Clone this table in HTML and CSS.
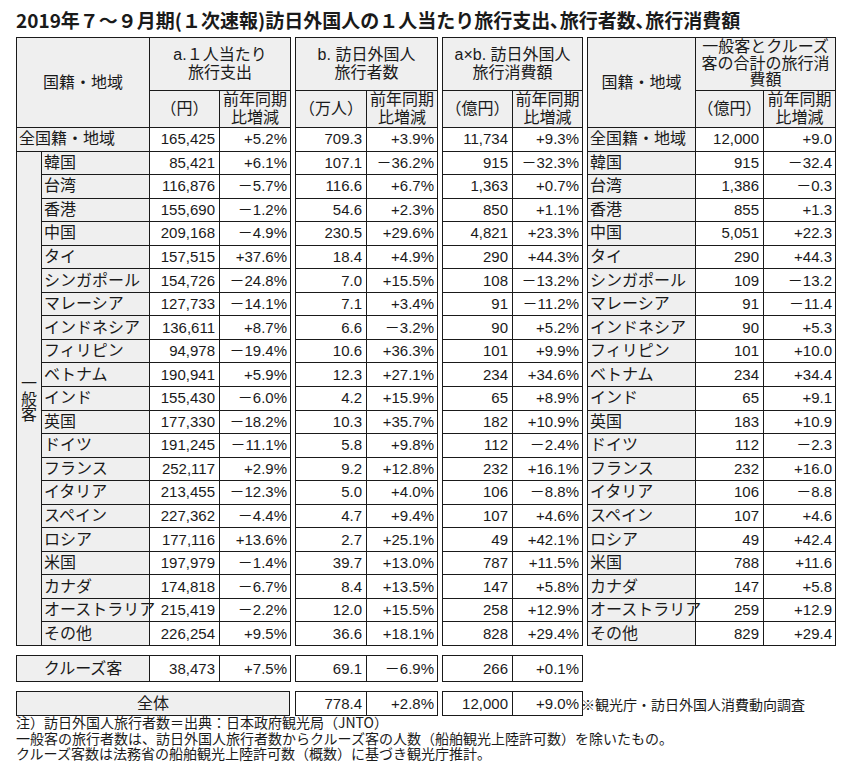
FILE: index.html
```html
<!DOCTYPE html>
<html lang="ja">
<head>
<meta charset="utf-8">
<title>訪日外国人の旅行支出</title>
<link rel="stylesheet" href="styles.css">
</head>
<body>
<div class="page">
  <h1 class="title">2019年７～９月期(１次速報)訪日外国人の１人当たり旅行支出､旅行者数､旅行消費額</h1>
  <div class="board">
    <table class="tbl main">
      <colgroup><col style="width:25px"><col style="width:108px"><col style="width:70px"><col style="width:71px"></colgroup>
      <tr class="hr1"><th rowspan="2" colspan="2">国籍・地域</th><th colspan="2">a.１人当たり<br>旅行支出</th></tr>
      <tr class="hr2"><th>（円）</th><th>前年同期<br>比増減</th></tr>
      <tr class="dr"><td colspan="2" class="name">全国籍・地域</td><td class="num">165,425</td><td class="pct">+5.2%</td></tr>
      <tr class="dr"><td rowspan="22" class="group">一<br>般<br>客</td><td class="name">韓国</td><td class="num">85,421</td><td class="pct">+6.1%</td></tr>
      <tr class="dr"><td class="name">台湾</td><td class="num">116,876</td><td class="pct">－5.7%</td></tr>
      <tr class="dr"><td class="name">香港</td><td class="num">155,690</td><td class="pct">－1.2%</td></tr>
      <tr class="dr"><td class="name">中国</td><td class="num">209,168</td><td class="pct">－4.9%</td></tr>
      <tr class="dr"><td class="name">タイ</td><td class="num">157,515</td><td class="pct">+37.6%</td></tr>
      <tr class="dr"><td class="name">シンガポール</td><td class="num">154,726</td><td class="pct">－24.8%</td></tr>
      <tr class="dr"><td class="name">マレーシア</td><td class="num">127,733</td><td class="pct">－14.1%</td></tr>
      <tr class="dr"><td class="name">インドネシア</td><td class="num">136,611</td><td class="pct">+8.7%</td></tr>
      <tr class="dr"><td class="name">フィリピン</td><td class="num">94,978</td><td class="pct">－19.4%</td></tr>
      <tr class="dr"><td class="name">ベトナム</td><td class="num">190,941</td><td class="pct">+5.9%</td></tr>
      <tr class="dr"><td class="name">インド</td><td class="num">155,430</td><td class="pct">－6.0%</td></tr>
      <tr class="dr"><td class="name">英国</td><td class="num">177,330</td><td class="pct">－18.2%</td></tr>
      <tr class="dr"><td class="name">ドイツ</td><td class="num">191,245</td><td class="pct">－11.1%</td></tr>
      <tr class="dr"><td class="name">フランス</td><td class="num">252,117</td><td class="pct">+2.9%</td></tr>
      <tr class="dr"><td class="name">イタリア</td><td class="num">213,455</td><td class="pct">－12.3%</td></tr>
      <tr class="dr"><td class="name">スペイン</td><td class="num">227,362</td><td class="pct">－4.4%</td></tr>
      <tr class="dr"><td class="name">ロシア</td><td class="num">177,116</td><td class="pct">+13.6%</td></tr>
      <tr class="dr"><td class="name">米国</td><td class="num">197,979</td><td class="pct">－1.4%</td></tr>
      <tr class="dr"><td class="name">カナダ</td><td class="num">174,818</td><td class="pct">－6.7%</td></tr>
      <tr class="dr"><td class="name">オーストラリア</td><td class="num">215,419</td><td class="pct">－2.2%</td></tr>
      <tr class="dr"><td class="name">その他</td><td class="num">226,254</td><td class="pct">+9.5%</td></tr>
    </table>

    <table class="tbl main">
      <colgroup><col style="width:71px"><col style="width:71px"></colgroup>
      <tr class="hr1"><th colspan="2">b. 訪日外国人<br>旅行者数</th></tr>
      <tr class="hr2"><th>（万人）</th><th>前年同期<br>比増減</th></tr>
      <tr class="dr"><td class="num">709.3</td><td class="pct">+3.9%</td></tr>
      <tr class="dr"><td class="num">107.1</td><td class="pct">－36.2%</td></tr>
      <tr class="dr"><td class="num">116.6</td><td class="pct">+6.7%</td></tr>
      <tr class="dr"><td class="num">54.6</td><td class="pct">+2.3%</td></tr>
      <tr class="dr"><td class="num">230.5</td><td class="pct">+29.6%</td></tr>
      <tr class="dr"><td class="num">18.4</td><td class="pct">+4.9%</td></tr>
      <tr class="dr"><td class="num">7.0</td><td class="pct">+15.5%</td></tr>
      <tr class="dr"><td class="num">7.1</td><td class="pct">+3.4%</td></tr>
      <tr class="dr"><td class="num">6.6</td><td class="pct">－3.2%</td></tr>
      <tr class="dr"><td class="num">10.6</td><td class="pct">+36.3%</td></tr>
      <tr class="dr"><td class="num">12.3</td><td class="pct">+27.1%</td></tr>
      <tr class="dr"><td class="num">4.2</td><td class="pct">+15.9%</td></tr>
      <tr class="dr"><td class="num">10.3</td><td class="pct">+35.7%</td></tr>
      <tr class="dr"><td class="num">5.8</td><td class="pct">+9.8%</td></tr>
      <tr class="dr"><td class="num">9.2</td><td class="pct">+12.8%</td></tr>
      <tr class="dr"><td class="num">5.0</td><td class="pct">+4.0%</td></tr>
      <tr class="dr"><td class="num">4.7</td><td class="pct">+9.4%</td></tr>
      <tr class="dr"><td class="num">2.7</td><td class="pct">+25.1%</td></tr>
      <tr class="dr"><td class="num">39.7</td><td class="pct">+13.0%</td></tr>
      <tr class="dr"><td class="num">8.4</td><td class="pct">+13.5%</td></tr>
      <tr class="dr"><td class="num">12.0</td><td class="pct">+15.5%</td></tr>
      <tr class="dr"><td class="num">36.6</td><td class="pct">+18.1%</td></tr>
    </table>

    <table class="tbl main">
      <colgroup><col style="width:70px"><col style="width:70px"></colgroup>
      <tr class="hr1"><th colspan="2">a×b. 訪日外国人<br>旅行消費額</th></tr>
      <tr class="hr2"><th>（億円）</th><th>前年同期<br>比増減</th></tr>
      <tr class="dr"><td class="num">11,734</td><td class="pct">+9.3%</td></tr>
      <tr class="dr"><td class="num">915</td><td class="pct">－32.3%</td></tr>
      <tr class="dr"><td class="num">1,363</td><td class="pct">+0.7%</td></tr>
      <tr class="dr"><td class="num">850</td><td class="pct">+1.1%</td></tr>
      <tr class="dr"><td class="num">4,821</td><td class="pct">+23.3%</td></tr>
      <tr class="dr"><td class="num">290</td><td class="pct">+44.3%</td></tr>
      <tr class="dr"><td class="num">108</td><td class="pct">－13.2%</td></tr>
      <tr class="dr"><td class="num">91</td><td class="pct">－11.2%</td></tr>
      <tr class="dr"><td class="num">90</td><td class="pct">+5.2%</td></tr>
      <tr class="dr"><td class="num">101</td><td class="pct">+9.9%</td></tr>
      <tr class="dr"><td class="num">234</td><td class="pct">+34.6%</td></tr>
      <tr class="dr"><td class="num">65</td><td class="pct">+8.9%</td></tr>
      <tr class="dr"><td class="num">182</td><td class="pct">+10.9%</td></tr>
      <tr class="dr"><td class="num">112</td><td class="pct">－2.4%</td></tr>
      <tr class="dr"><td class="num">232</td><td class="pct">+16.1%</td></tr>
      <tr class="dr"><td class="num">106</td><td class="pct">－8.8%</td></tr>
      <tr class="dr"><td class="num">107</td><td class="pct">+4.6%</td></tr>
      <tr class="dr"><td class="num">49</td><td class="pct">+42.1%</td></tr>
      <tr class="dr"><td class="num">787</td><td class="pct">+11.5%</td></tr>
      <tr class="dr"><td class="num">147</td><td class="pct">+5.8%</td></tr>
      <tr class="dr"><td class="num">258</td><td class="pct">+12.9%</td></tr>
      <tr class="dr"><td class="num">828</td><td class="pct">+29.4%</td></tr>
    </table>

    <table class="tbl main">
      <colgroup><col style="width:108px"><col style="width:68px"><col style="width:72px"></colgroup>
      <tr class="hr1"><th rowspan="2">国籍・地域</th><th colspan="2" class="three">一般客とクルーズ<br>客の合計の旅行消<br>費額</th></tr>
      <tr class="hr2"><th>（億円）</th><th>前年同期<br>比増減</th></tr>
      <tr class="dr"><td class="name">全国籍・地域</td><td class="num">12,000</td><td class="pct">+9.0</td></tr>
      <tr class="dr"><td class="name">韓国</td><td class="num">915</td><td class="pct">－32.4</td></tr>
      <tr class="dr"><td class="name">台湾</td><td class="num">1,386</td><td class="pct">－0.3</td></tr>
      <tr class="dr"><td class="name">香港</td><td class="num">855</td><td class="pct">+1.3</td></tr>
      <tr class="dr"><td class="name">中国</td><td class="num">5,051</td><td class="pct">+22.3</td></tr>
      <tr class="dr"><td class="name">タイ</td><td class="num">290</td><td class="pct">+44.3</td></tr>
      <tr class="dr"><td class="name">シンガポール</td><td class="num">109</td><td class="pct">－13.2</td></tr>
      <tr class="dr"><td class="name">マレーシア</td><td class="num">91</td><td class="pct">－11.4</td></tr>
      <tr class="dr"><td class="name">インドネシア</td><td class="num">90</td><td class="pct">+5.3</td></tr>
      <tr class="dr"><td class="name">フィリピン</td><td class="num">101</td><td class="pct">+10.0</td></tr>
      <tr class="dr"><td class="name">ベトナム</td><td class="num">234</td><td class="pct">+34.4</td></tr>
      <tr class="dr"><td class="name">インド</td><td class="num">65</td><td class="pct">+9.1</td></tr>
      <tr class="dr"><td class="name">英国</td><td class="num">183</td><td class="pct">+10.9</td></tr>
      <tr class="dr"><td class="name">ドイツ</td><td class="num">112</td><td class="pct">－2.3</td></tr>
      <tr class="dr"><td class="name">フランス</td><td class="num">232</td><td class="pct">+16.0</td></tr>
      <tr class="dr"><td class="name">イタリア</td><td class="num">106</td><td class="pct">－8.8</td></tr>
      <tr class="dr"><td class="name">スペイン</td><td class="num">107</td><td class="pct">+4.6</td></tr>
      <tr class="dr"><td class="name">ロシア</td><td class="num">49</td><td class="pct">+42.4</td></tr>
      <tr class="dr"><td class="name">米国</td><td class="num">788</td><td class="pct">+11.6</td></tr>
      <tr class="dr"><td class="name">カナダ</td><td class="num">147</td><td class="pct">+5.8</td></tr>
      <tr class="dr"><td class="name">オーストラリア</td><td class="num">259</td><td class="pct">+12.9</td></tr>
      <tr class="dr"><td class="name">その他</td><td class="num">829</td><td class="pct">+29.4</td></tr>
    </table>

    <table class="tbl cruise">
      <colgroup><col style="width:133px"><col style="width:70px"><col style="width:71px"></colgroup>
      <tr><td class="label">クルーズ客</td><td class="num">38,473</td><td class="pct">+7.5%</td></tr>
    </table>
    <table class="tbl cruise">
      <colgroup><col style="width:71px"><col style="width:71px"></colgroup>
      <tr><td class="num">69.1</td><td class="pct">－6.9%</td></tr>
    </table>
    <table class="tbl cruise">
      <colgroup><col style="width:70px"><col style="width:70px"></colgroup>
      <tr><td class="num">266</td><td class="pct">+0.1%</td></tr>
    </table>
    <div class="blank"></div>

    <table class="tbl total">
      <tr><td class="label">全体</td></tr>
    </table>
    <table class="tbl total">
      <colgroup><col style="width:71px"><col style="width:71px"></colgroup>
      <tr><td class="num">778.4</td><td class="pct">+2.8%</td></tr>
    </table>
    <table class="tbl total">
      <colgroup><col style="width:70px"><col style="width:70px"></colgroup>
      <tr><td class="num">12,000</td><td class="pct">+9.0%</td></tr>
    </table>
    <p class="source">※観光庁・訪日外国人消費動向調査</p>
  </div>
  <div class="notes">
    <p>注）訪日外国人旅行者数＝出典：日本政府観光局（JNTO）</p>
    <p>一般客の旅行者数は、訪日外国人旅行者数からクルーズ客の人数（船舶観光上陸許可数）を除いたもの。</p>
    <p>クルーズ客数は法務省の船舶観光上陸許可数（概数）に基づき観光庁推計。</p>
  </div>
</div>
</body>
</html>
```

FILE: styles.css
```css
* { box-sizing: border-box; }

body {
  margin: 0;
  background: #ffffff;
  color: #1a1a1a;
  font-family: "Liberation Sans", "Noto Sans CJK JP", sans-serif;
}

.page {
  width: 846px;
  padding: 8px 0 0 16px;
}

.title {
  margin: 0;
  font-family: "Noto Sans CJK JP", sans-serif;
  font-weight: 700;
  font-size: 19px;
  line-height: 24px;
  white-space: nowrap;
  color: #1a1a1a;
}

.board {
  display: grid;
  grid-template-columns: 274px 142px 140px 248px;
  column-gap: 5px;
  row-gap: 9px;
  margin-top: 5px;
  align-items: start;
}

.tbl {
  border-collapse: collapse;
  table-layout: fixed;
  width: 100%;
}

.tbl th,
.tbl td {
  border: 1px solid #1a1a1a;
  padding: 0;
}

.tbl th {
  background: #efefef;
  font-weight: 400;
  font-size: 16px;
  line-height: 18px;
  text-align: center;
  vertical-align: middle;
}

.tbl th.three {
  line-height: 16.5px;
}

.hr1 { height: 53px; }
.hr2 { height: 37px; }
.dr { height: 23.55px; }

.tbl td {
  line-height: 20px;
  vertical-align: middle;
  white-space: nowrap;
}

.name {
  background: #efefef;
  font-size: 16px;
  padding-left: 2px !important;
  text-align: left;
}

.group {
  background: #efefef;
  font-size: 16px;
  line-height: 15.5px !important;
  text-align: center;
  padding-top: 2px !important;
}

.num {
  font-size: 15px;
  text-align: right;
  padding-right: 4px !important;
  background: #ffffff;
}

.pct {
  font-size: 15px;
  text-align: right;
  padding-right: 3px !important;
  background: #ffffff;
}

.cruise tr { height: 26px; }
.total tr { height: 24px; }

.label {
  background: #efefef;
  font-size: 16px;
  text-align: center;
}

.source {
  margin: 0 0 0 -6px;
  align-self: center;
  font-family: "Noto Sans CJK JP", sans-serif;
  font-size: 14px;
  line-height: 18px;
  white-space: nowrap;
}

.notes {
  margin-top: -1px;
  font-family: "Noto Sans CJK JP", sans-serif;
  font-size: 14px;
  line-height: 15.5px;
}

.notes p {
  margin: 0;
  white-space: nowrap;
}
```
